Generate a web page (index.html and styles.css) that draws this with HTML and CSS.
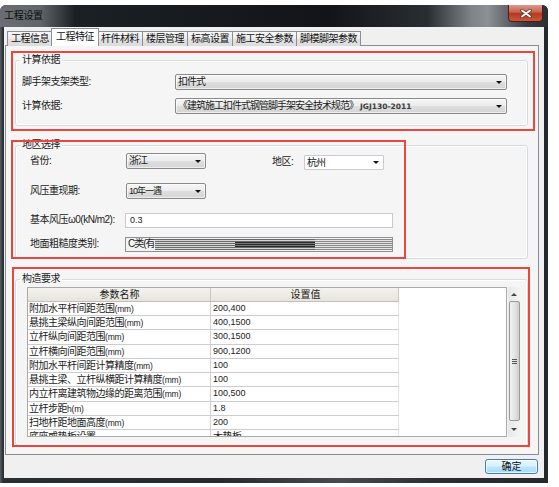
FILE: index.html
```html
<!DOCTYPE html>
<html lang="zh">
<head>
<meta charset="utf-8">
<title>工程设置</title>
<link rel="stylesheet" href="styles.css">
</head>
<body>
<div class="window">
  <div class="titlebar">
    <span class="title">工程设置</span>
    <span class="close"><svg width="12" height="9" viewBox="0 0 12 9"><path d="M2 1.5 L10 7.5 M10 1.5 L2 7.5" stroke="#5a2a22" stroke-width="3.4" stroke-linecap="round"/><path d="M2 1.5 L10 7.5 M10 1.5 L2 7.5" stroke="#fff" stroke-width="2" stroke-linecap="round"/></svg></span>
  </div>
  <div class="client">
    <div class="tabs">
      <span class="tab">工程信息</span>
      <span class="tab active">工程特征</span>
      <span class="tab">杆件材料</span>
      <span class="tab">楼层管理</span>
      <span class="tab">标高设置</span>
      <span class="tab">施工安全参数</span>
      <span class="tab">脚模脚架参数</span>
    </div>
    <div class="panel">
      <fieldset class="group g1">
        <legend>计算依据</legend>
        <div class="form1">
          <span class="lbl">脚手架支架类型:</span>
          <div class="combo"><span class="val">扣件式</span><i class="arrow"></i></div>
          <span class="lbl">计算依据:</span>
          <div class="combo"><span class="val">《建筑施工扣件式钢管脚手架安全技术规范》<b class="code">JGJ130-2011</b></span><i class="arrow"></i></div>
        </div>
      </fieldset>
      <fieldset class="group g2">
        <legend>地区选择</legend>
        <div class="form2">
          <div class="row r1">
            <span class="lbl2">省份:</span>
            <div class="combo small"><span class="val">浙江</span><i class="arrow"></i></div>
            <span class="lbl3">地区:</span>
            <div class="combo small flat"><span class="val">杭州</span><i class="arrow"></i></div>
          </div>
          <div class="row r2">
            <span class="lbl2">风压重现期:</span>
            <div class="combo small"><span class="val num">10年一遇</span><i class="arrow"></i></div>
          </div>
          <div class="row r3">
            <span class="lbl2">基本风压ω0(kN/m2):</span>
            <div class="input"><span class="num">0.3</span></div>
          </div>
          <div class="row r4">
            <span class="lbl2">地面粗糙度类别:</span>
            <div class="input glitch"><span class="gtext">C类(有</span><span class="lines"><i class="dark"></i><i class="light"></i></span></div>
          </div>
        </div>
      </fieldset>
      <fieldset class="group g3">
        <legend>构造要求</legend>
        <div class="gridwrap">
          <div class="table">
            <div class="trow head"><span class="c1">参数名称</span><span class="c2">设置值</span></div>
            <div class="trow"><span class="c1">附加水平杆间距范围<small>(mm)</small></span><span class="c2 num">200,400</span></div>
            <div class="trow"><span class="c1">悬挑主梁纵向间距范围<small>(mm)</small></span><span class="c2 num">400,1500</span></div>
            <div class="trow"><span class="c1">立杆纵向间距范围<small>(mm)</small></span><span class="c2 num">300,1500</span></div>
            <div class="trow"><span class="c1">立杆横向间距范围<small>(mm)</small></span><span class="c2 num">900,1200</span></div>
            <div class="trow"><span class="c1">附加水平杆间距计算精度<small>(mm)</small></span><span class="c2 num">100</span></div>
            <div class="trow"><span class="c1">悬挑主梁、立杆纵横距计算精度<small>(mm)</small></span><span class="c2 num">100</span></div>
            <div class="trow"><span class="c1">内立杆离建筑物边缘的距离范围<small>(mm)</small></span><span class="c2 num">100,500</span></div>
            <div class="trow"><span class="c1">立杆步距<small>h(m)</small></span><span class="c2 num">1.8</span></div>
            <div class="trow"><span class="c1">扫地杆距地面高度<small>(mm)</small></span><span class="c2 num">200</span></div>
            <div class="trow"><span class="c1">底座或垫板设置</span><span class="c2">木垫板</span></div>
          </div>
          <div class="scroll">
            <span class="sbtn"><i class="up"></i></span>
            <span class="thumb"><i class="grip"></i></span>
            <span class="sbtn down"><i class="dn"></i></span>
          </div>
        </div>
      </fieldset>
    </div>
    <div class="footer"><button class="ok">确定</button></div>
  </div>
</div>
<div class="mark m1"></div>
<div class="mark m2"></div>
<div class="mark m3"></div>
</body>
</html>
```

FILE: styles.css
```css
html, body {
  margin: 0;
  padding: 0;
}
body {
  width: 559px;
  height: 487px;
  overflow: hidden;
  background: #ffffff;
  font-family: "Liberation Sans", "Noto Sans CJK SC", sans-serif;
  font-size: 10px;
  line-height: 12px;
  letter-spacing: -0.5px;
  color: #1b1b1b;
}

.window {
  margin-top: 5px;
  width: 548px;
  height: 478px;
  display: flex;
  flex-direction: column;
  border-radius: 6px 6px 0 0;
  background: linear-gradient(to right, #596064 0, #2a2f33 3px, #262a2e 40%, #474b50 62%, #2a2e33 80%, #25292d 100%);
}

.titlebar {
  height: 22px;
  display: flex;
  align-items: flex-start;
  border-radius: 6px 6px 0 0;
  background: linear-gradient(to right, #6a6e73 0, #62666b 40px, #1c1f23 75px, #121418 60%, #2a2d31 78%, #7f8287 86%, #8c8f93 89%, #3a3d41 96%, #2a2d31 100%);
}
.title {
  margin: 5px 0 0 4px;
  line-height: 12px;
  color: #0c0c0c;
  letter-spacing: -0.3px;
}
.close {
  margin: 0 5px 0 auto;
  width: 35px;
  height: 17px;
  box-sizing: border-box;
  border: 1px solid #4d1d16;
  border-top: none;
  border-radius: 0 0 4px 4px;
  background: linear-gradient(#dc9a8d 0, #c9604c 45%, #b03a22 52%, #c9583c 100%);
  display: flex;
  align-items: center;
  justify-content: center;
}
.close svg { display: block; }

.client {
  flex: 1;
  margin: 0 4px 5px;
  background: #f0f0f0;
  display: flex;
  flex-direction: column;
}

.tabs {
  display: flex;
  align-items: flex-end;
  height: 18px;
  margin: 1px 0 -1px 3px;
  position: relative;
  z-index: 1;
}
.tab {
  height: 15px;
  box-sizing: border-box;
  padding: 0 3px;
  margin-right: -1px;
  border: 1px solid #8b8e95;
  border-bottom: none;
  line-height: 14px;
  background: linear-gradient(#f7f7f7, #ececec 50%, #e2e2e2 51%, #dcdcdc);
  color: #111;
  white-space: nowrap;
}
.tab.active {
  height: 18px;
  background: #ffffff;
  padding: 0 4px;
  margin: 0 -2px 0 -1px;
  line-height: 16px;
  position: relative;
  z-index: 2;
}

.panel {
  height: 410px;
  box-sizing: border-box;
  margin: 0 5px 0 1px;
  border: 1px solid #898c95;
  background: #f5f5f5;
  padding: 8px 10px 0 9px;
}

.group {
  margin: 0;
  min-width: 0;
  border: 1px solid #d6dde2;
  border-radius: 3px;
  box-shadow: inset 0 0 0 1px #ffffff;
  padding: 8px 20px 11px 6px;
}
.group legend {
  padding: 0 2px;
  margin-left: -2px;
  line-height: 12px;
}
.g2 { margin-top: 13px; padding: 1px 20px 6px 6px; }
.g3 { margin-top: 14px; padding: 2px 6px 8px 11px; }
.g3 legend { margin-left: -7px; }

.form1 {
  display: grid;
  grid-template-columns: 153px 1fr;
  row-gap: 8px;
  align-items: center;
}
.lbl { line-height: 16px; }

.combo {
  height: 16px;
  box-sizing: border-box;
  border: 1px solid #8a8a8a;
  border-radius: 2px;
  background: linear-gradient(#f6f6f6 0, #ececec 48%, #dedede 52%, #d4d4d4 100%);
  display: flex;
  align-items: center;
  padding: 0 4px 0 2px;
  box-shadow: inset 0 0 0 1px rgba(255,255,255,0.6);
}
.combo .val {
  flex: 1;
  white-space: nowrap;
  overflow: hidden;
  letter-spacing: -1px;
}
.code {
  font-family: "DejaVu Sans", sans-serif;
  font-size: 7.5px;
  letter-spacing: 0;
  font-weight: bold;
  color: #3a3a3a;
  margin-left: 2px;
}
.arrow {
  width: 0;
  height: 0;
  border-left: 3px solid transparent;
  border-right: 3px solid transparent;
  border-top: 3px solid #111;
}

.form2 { padding-left: 8px; }
.row { display: flex; align-items: center; }
.r2 { margin-top: 13px; }
.r3 { margin-top: 13px; }
.r4 { margin-top: 8px; }
.lbl2 { width: 96px; line-height: 16px; flex: none; }
.lbl3 { width: 32px; margin-left: 66px; line-height: 16px; margin-top: 2px; }
.combo.small { width: 80px; flex: none; }
.combo.flat {
  height: 15px;
  margin-top: 3px;
  background: #ffffff;
  border: 1px solid #c9cbd0;
  border-radius: 1px;
  box-shadow: none;
}
.num {
  font-family: "Liberation Sans", "Noto Sans CJK SC", sans-serif;
  font-size: 9px;
  letter-spacing: 0;
}
.input {
  width: 268px;
  height: 15px;
  box-sizing: border-box;
  margin-left: -1px;
  border: 1px solid #c7c9ce;
  background: #ffffff;
  display: flex;
  align-items: center;
  padding: 0 4px;
}
.glitch {
  border: 1px solid #8f9095;
  background: #f3f3f3;
  padding: 0 0 0 2px;
}
.gtext { letter-spacing: -1px; white-space: nowrap; }
.lines {
  flex: 1;
  height: 11px;
  display: flex;
  background: repeating-linear-gradient(to bottom, #6a6a6a 0, #6a6a6a 1px, #d6d6d6 1px, #d6d6d6 2px);
}
.lines .dark {
  margin-left: 80px;
  width: 80px;
  height: 5px;
  margin-top: 3px;
  background: repeating-linear-gradient(to bottom, #2c2c2c 0, #2c2c2c 1px, #777 1px, #777 2px);
}
.lines .light {
  flex: 1;
  background: repeating-linear-gradient(to bottom, #8a8a8a 0, #8a8a8a 1px, #e4e4e4 1px, #e4e4e4 2px);
}

.gridwrap { display: flex; }
.table {
  width: 480px;
  height: 150px;
  flex: none;
  box-sizing: border-box;
  border: 1px solid #a9a9a9;
  background: #ffffff;
  overflow: hidden;
}
.trow {
  display: flex;
  width: 371px;
  height: 14.22px;
  box-sizing: border-box;
  border-bottom: 1px solid #cdcdcd;
  align-items: center;
  white-space: nowrap;
}
.trow .c1 {
  width: 183px;
  flex: none;
  height: 100%;
  box-sizing: border-box;
  border-right: 1px solid #d3d3d3;
  padding-left: 1px;
  line-height: 13px;
  overflow: hidden;
}
.trow .c2 {
  flex: 1;
  padding-left: 2px;
  line-height: 13px;
  border-right: 1px solid #e6e6e6;
  height: 100%;
}
.trow small {
  font-size: 8.5px;
  letter-spacing: -0.2px;
}
.trow.head {
  height: 14px;
  background: linear-gradient(#f4f3ee, #e6e4dc);
  border-bottom: 1px solid #c2c0b6;
}
.trow.head .c1, .trow.head .c2 {
  text-align: center;
  border-right: 1px solid #c9c7bd;
  letter-spacing: 0;
}

.scroll {
  width: 12px;
  height: 150px;
  flex: none;
  margin-left: 1px;
  background: linear-gradient(to right, #e7e7e7, #f4f4f4);
  display: flex;
  flex-direction: column;
  align-items: center;
}
.sbtn {
  height: 14px;
  width: 11px;
  display: flex;
  align-items: center;
  justify-content: center;
}
.sbtn.down { height: 16px; margin-top: auto; }
.up {
  border-left: 3px solid transparent;
  border-right: 3px solid transparent;
  border-bottom: 3px solid #444;
}
.dn {
  border-left: 3px solid transparent;
  border-right: 3px solid transparent;
  border-top: 3px solid #444;
}
.thumb {
  width: 11px;
  height: 120px;
  box-sizing: border-box;
  border: 1px solid #9a9a9a;
  border-radius: 2px;
  background: linear-gradient(to right, #f2f2f2, #e4e4e4 50%, #cfcfcf);
  display: flex;
  align-items: center;
  justify-content: center;
}
.grip {
  width: 5px;
  height: 5px;
  background: repeating-linear-gradient(to bottom, #555 0, #555 1px, transparent 1px, transparent 2px);
}

.footer {
  flex: 1;
  display: flex;
  justify-content: flex-end;
  align-items: flex-start;
  padding: 4px 6px 0 0;
}
.ok {
  width: 53px;
  height: 15px;
  padding: 0;
  border: 1px solid #3c7fb1;
  border-radius: 3px;
  background: linear-gradient(#eaf6fd, #d9f0fc 48%, #bee6fd 52%, #a7d9f5);
  box-shadow: inset 0 0 0 1px rgba(255,255,255,0.7);
  font-family: "Liberation Sans", "Noto Sans CJK SC", sans-serif;
  font-size: 10px;
  line-height: 12px;
  color: #111;
}

.mark {
  position: absolute;
  box-sizing: border-box;
  border: 2px solid #e8463f;
}
.m1 { left: 11px; top: 51px; width: 524px; height: 80px; }
.m2 { left: 11px; top: 140px; width: 395px; height: 119px; }
.m3 { left: 12px; top: 267px; width: 518px; height: 180px; }
```
